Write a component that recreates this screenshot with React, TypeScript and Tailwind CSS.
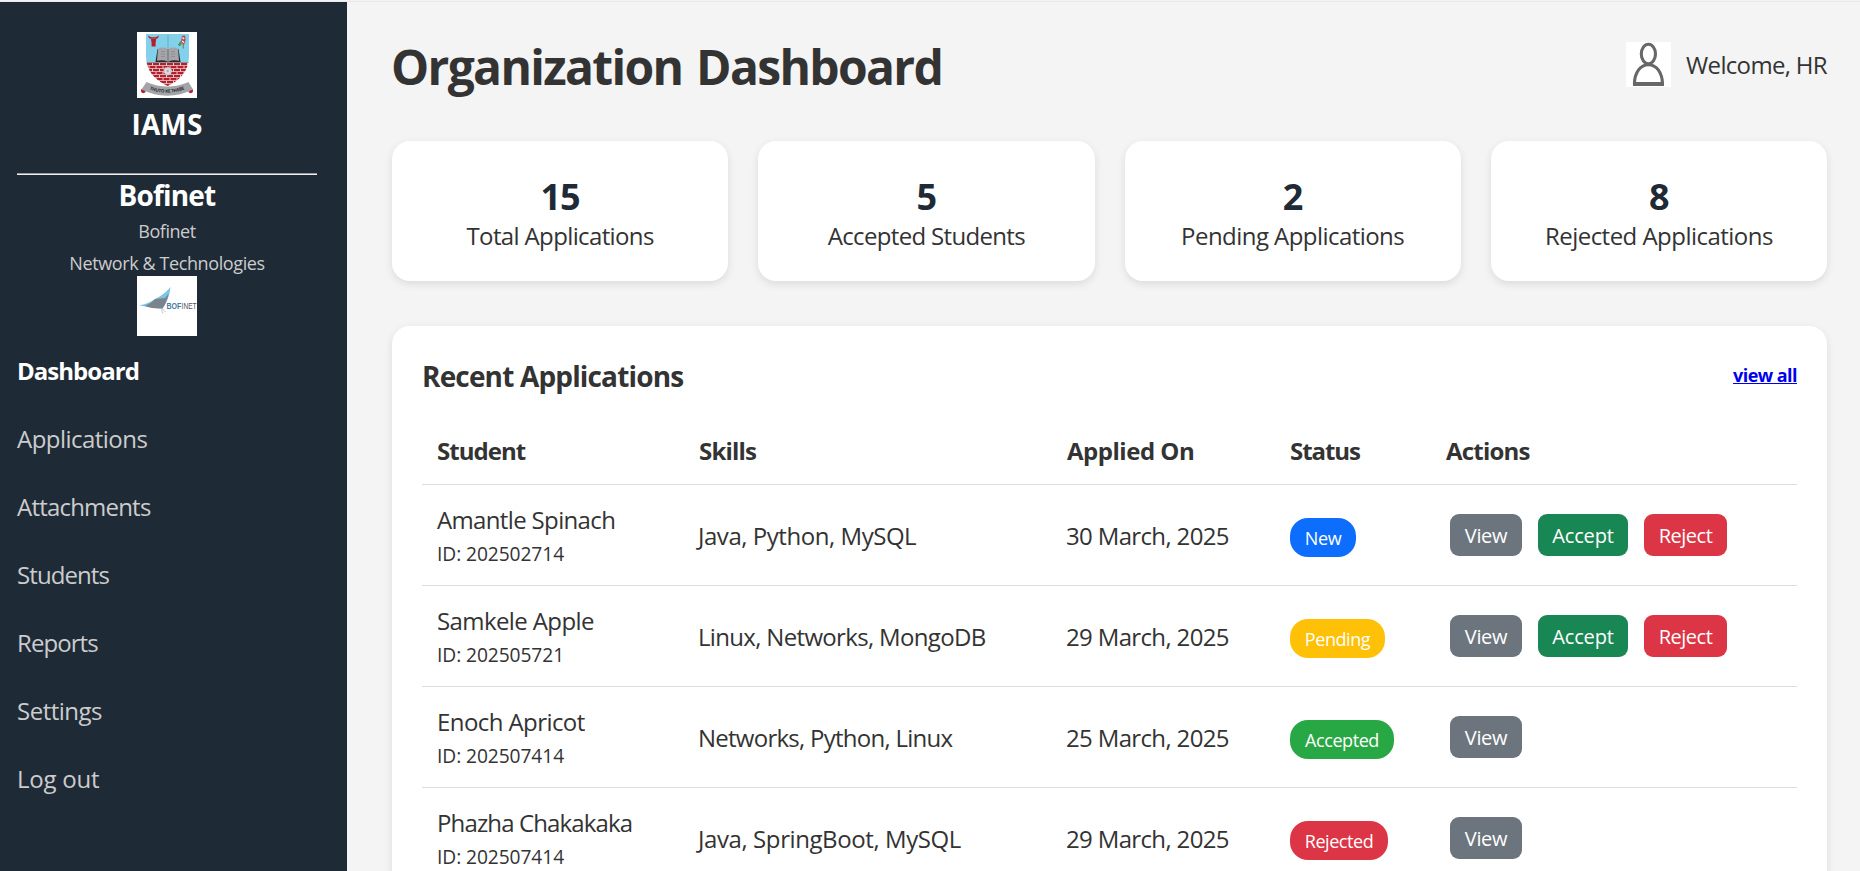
type Status = "New" | "Pending" | "Accepted" | "Rejected";

type Application = {
  name: string;
  id: string;
  skills: string;
  skillsClass: string;
  nameClass: string;
  appliedOn: string;
  status: Status;
};

const stats = [
  { value: "15", label: "Total Applications", tracking: "tracking-[-0.026em]" },
  { value: "5", label: "Accepted Students", tracking: "tracking-[-0.028em]" },
  { value: "2", label: "Pending Applications", tracking: "tracking-[-0.023em]" },
  { value: "8", label: "Rejected Applications", tracking: "tracking-[-0.022em]" },
];

const links = [
  { label: "Applications", tracking: "tracking-[-0.022em]" },
  { label: "Attachments", tracking: "tracking-[-0.033em]" },
  { label: "Students", tracking: "tracking-[-0.038em]" },
  { label: "Reports", tracking: "tracking-[-0.039em]" },
  { label: "Settings", tracking: "tracking-[-0.021em]" },
  { label: "Log out", tracking: "tracking-[-0.010em]" },
];

const applications: Application[] = [
  { name: "Amantle Spinach", nameClass: "tracking-[-0.027em]", id: "202502714", skills: "Java, Python, MySQL", skillsClass: "tracking-[-0.019em]", appliedOn: "30 March, 2025", status: "New" },
  { name: "Samkele Apple", nameClass: "tracking-[-0.025em]", id: "202505721", skills: "Linux, Networks, MongoDB", skillsClass: "tracking-[-0.028em]", appliedOn: "29 March, 2025", status: "Pending" },
  { name: "Enoch Apricot", nameClass: "tracking-[-0.024em]", id: "202507414", skills: "Networks, Python, Linux", skillsClass: "tracking-[-0.031em]", appliedOn: "25 March, 2025", status: "Accepted" },
  { name: "Phazha Chakakaka", nameClass: "tracking-[-0.036em]", id: "202507414", skills: "Java, SpringBoot, MySQL", skillsClass: "tracking-[-0.017em]", appliedOn: "29 March, 2025", status: "Rejected" },
];

const badges: Record<Status, string> = {
  New: "w-[66px] bg-[#0d6efd]",
  Pending: "w-[95px] bg-[#ffc107]",
  Accepted: "w-[104px] bg-[#28a745]",
  Rejected: "w-[98px] bg-[#dc3545]",
};

function Crest() {
  return (
    <svg viewBox="0 0 60 66" className="h-[66px] w-[60px] bg-white">
      <defs>
        <clipPath id="shield">
          <path d="M9 2H52V24C52 38 44 48 30.7 54C17 48 9 38 9 24Z" />
        </clipPath>
        <pattern id="bricks" x="9" y="31" width="7" height="6" patternUnits="userSpaceOnUse">
          <rect width="7" height="6" fill="#e6c9cc" />
          <rect x="0" y="0" width="6" height="2.2" fill="#b3202c" />
          <rect x="-3.5" y="3" width="6" height="2.2" fill="#b3202c" />
          <rect x="3.5" y="3" width="6" height="2.2" fill="#b3202c" />
        </pattern>
        <path id="motto" d="M12.5 57.4Q30.5 64.5 50 56.4" />
      </defs>
      <g clipPath="url(#shield)">
        <rect x="9" y="2" width="43" height="29" fill="#82d0ea" />
        <rect x="9" y="30.5" width="43" height="25" fill="url(#bricks)" />
        <rect x="9" y="30" width="43" height="0.9" fill="#8b8f96" />
      </g>
      <path d="M31 3V16" stroke="#6f9fb2" strokeWidth="0.8" />
      <path d="M11.3 3.5Q11 6.6 14 6.8H19Q22 6.6 21.6 3.5Q20 5.4 18 5.3H15Q13 5.4 11.3 3.5ZM13.8 6.5H19.3L18.6 11V14.5H14.6V11Z" fill="#b3202c" />
      <path d="M45 4L48 3.5L48.6 8L47 13L44 10Z" fill="#c2434b" />
      <path d="M45.5 5.5L47.2 7M45 9L47 10.5" stroke="#fff" strokeWidth="1.1" />
      <path d="M41 12.5L44 8.5L45 12L42.5 14.5Z" fill="#3f9a5a" />
      <path d="M46.2 12V16.5" stroke="#7b6b5c" strokeWidth="1" />
      <path d="M20.5 17H41.5L43.5 30H18.5Z" fill="#26282b" />
      <path d="M21 16.5Q26.5 14.5 31 17Q35.5 14.5 41 16.5L42 28.8Q36 27.5 31 29.8Q26 27.5 20 28.8Z" fill="#a3a5a9" />
      <path d="M31 17V29.5" stroke="#66686c" strokeWidth="0.9" />
      <path d="M24 19.5H28M24 22H28M24 24.5H28M34 19.5H38M34 22H38M34 24.5H38" stroke="#85878b" strokeWidth="0.7" />
      <circle cx="30.7" cy="39" r="3.6" fill="#dcdde0" stroke="#c9cbce" strokeWidth="1.6" strokeDasharray="1.4 0.9" />
      <circle cx="30.7" cy="39" r="1.2" fill="#a9abaf" />
      <circle cx="6.3" cy="58.8" r="2.4" fill="#b3202c" />
      <circle cx="53.7" cy="58.8" r="2.4" fill="#b3202c" />
      <path d="M9.5 50Q30.5 59 51.5 50L56 57.5Q30.5 70 4.5 57.5Z" fill="#a2a4a8" />
      <text fontSize="4.6" fontWeight="700" fill="#2b2c2e" fontFamily="Open Sans, sans-serif">
        <textPath href="#motto" textLength="36">THUTO KE THEBE</textPath>
      </text>
    </svg>
  );
}

function CompanyLogo() {
  return (
    <svg viewBox="0 0 60 60" className="h-[60px] w-[60px] overflow-visible bg-white">
      <path d="M2 29.3Q11 28 19 22.5Q28 18 33.5 11Q32.5 23 25.5 32.5Q14 32.5 2 29.3Z" fill="#7cc4e6" />
      <path d="M8 30Q14 27.5 18 23L28 22L31.5 18Q30 26 25.5 32.5Q16 33 8 30Z" fill="#7b848c" />
      <path d="M25.3 32Q23.8 34.5 26 37.5M25.5 33L28.5 36" stroke="#aab0b5" strokeWidth="0.7" fill="none" />
      <text x="29.4" y="33.4" fontSize="8.6" fontFamily="Liberation Sans, sans-serif" fontWeight="700" fill="#4a7da3" textLength="15" lengthAdjust="spacingAndGlyphs">
        BOF
      </text>
      <text x="44.6" y="33.4" fontSize="8.6" fontFamily="Liberation Sans, sans-serif" fill="#4d5258" textLength="15" lengthAdjust="spacingAndGlyphs">
        INET
      </text>
    </svg>
  );
}

function UserIcon() {
  return (
    <svg viewBox="0 0 45 45" className="h-[45px] w-[45px] bg-white" fill="none" stroke="#666867" strokeWidth="3.1">
      <ellipse cx="22.4" cy="12" rx="7.1" ry="9.7" />
      <path d="M8.4 42.2C8.6 30 14.6 22.7 22.4 22.7S36.3 30 36.5 42.2" />
      <path d="M7 42H38" strokeWidth="4" />
    </svg>
  );
}

function Sidebar() {
  return (
    <aside className="flex w-[347px] shrink-0 flex-col bg-[#1f2a37] pt-[30px] pr-[30px] pl-[17px] text-[#ccc]">
      <div className="flex flex-col items-center">
        <Crest />
        <h2 className="mt-[7px] text-[28px] leading-[38px] font-bold tracking-[0.004em] text-white">IAMS</h2>
      </div>
      <hr className="mt-[30px] h-[2px] border-0 border-t border-t-[#9a9a9a] bg-[#eee]" />
      <div className="flex flex-col items-center">
        <h2 className="pt-px text-[28px] leading-[38px] font-bold tracking-[-0.03em] text-white">Bofinet</h2>
        <p className="mt-px text-[18px] leading-8 tracking-[-0.026em]">Bofinet</p>
        <p className="mt-[3px] text-[18px] leading-[26px] tracking-[-0.022em]">Network &amp; Technologies</p>
        <CompanyLogo />
      </div>
      <nav className="flex flex-col pt-px text-2xl">
        <a className="leading-[68px] font-bold tracking-[-0.04em] text-white">Dashboard</a>
        {links.map((link) => (
          <a key={link.label} className={`leading-[68px] ${link.tracking}`}>
            {link.label}
          </a>
        ))}
      </nav>
    </aside>
  );
}

function ApplicationRow({ application }: { application: Application }) {
  const open = application.status === "New" || application.status === "Pending";
  return (
    <tr className="h-[101px] border-b border-[#ddd]">
      <td className="pt-[3px] pl-[15px]">
        <div className={`leading-[34px] ${application.nameClass}`}>{application.name}</div>
        <div className="text-[19.2px] leading-[33px] tracking-[-0.004em]">ID: {application.id}</div>
      </td>
      <td className={`pt-[2px] pl-[14px] ${application.skillsClass}`}>{application.skills}</td>
      <td className="pt-[2px] pl-[14px] tracking-[-0.027em]">{application.appliedOn}</td>
      <td className="pt-[5px] pl-[15px]">
        <span className={`flex h-[39px] items-center justify-center rounded-[18px] pt-px text-[18px] leading-6 tracking-[-0.024em] text-white ${badges[application.status]}`}>
          {application.status}
        </span>
      </td>
      <td className="pl-[19px]">
        <div className="flex h-[42px] text-[20px] font-medium text-white">
          <button className="w-[72px] rounded-[9px] bg-[#6c757d] pt-[3px] tracking-[-0.016em]">View</button>
          {open && (
            <>
              <button className="ml-[16px] w-[90px] rounded-[9px] bg-[#198754] pt-[3px] tracking-[-0.008em]">Accept</button>
              <button className="ml-[16px] w-[83px] rounded-[9px] bg-[#dc3545] pt-[3px] tracking-[-0.024em]">Reject</button>
            </>
          )}
        </div>
      </td>
    </tr>
  );
}

export default function App() {
  return (
    <div className="flex h-[871px] flex-col overflow-hidden bg-[#f4f4f4] font-['Open_Sans','Noto_Sans',sans-serif] text-2xl text-[#333]">
      <div className="h-[2px] shrink-0 border-b border-[#e9e9ed] bg-[#f3f3f7]" />
      <div className="flex min-h-0 flex-1">
        <Sidebar />
        <main className="min-w-0 flex-1 pt-[30px] pr-[33px] pl-[45px]">
          <header className="flex h-[65px] items-center justify-between">
            <h1 className="-ml-px pt-[4px] text-[48px] leading-[64px] font-bold tracking-[-0.035em] [word-spacing:3px]">Organization Dashboard</h1>
            <div className="flex items-center gap-[15px]">
              <UserIcon />
              <span className="pt-px leading-8 tracking-[-0.028em]">Welcome, HR</span>
            </div>
          </header>

          <section className="mt-[44px] grid grid-cols-4 gap-[30px]">
            {stats.map((stat) => (
              <div key={stat.label} className="h-[140px] rounded-[18px] bg-white pt-[32px] text-center shadow-[0_3px_8px_rgba(0,0,0,0.1)]">
                <h3 className="text-[36px] leading-[48px] font-bold tracking-[-0.03em] text-[#1f2a37]">{stat.value}</h3>
                <p className={`-mt-px leading-8 ${stat.tracking}`}>{stat.label}</p>
              </div>
            ))}
          </section>

          <section className="mt-[45px] h-[700px] rounded-[18px] bg-white p-[30px] shadow-[0_3px_8px_rgba(0,0,0,0.1)]">
            <div className="flex h-[38px] items-center justify-between">
              <h2 className="pt-[2px] text-[28px] leading-[38px] font-bold tracking-[-0.03em]">Recent Applications</h2>
              <a className="text-[18px] leading-6 font-bold tracking-[-0.03em] text-[#0000ee] underline">view all</a>
            </div>
            <table className="mt-[23px] w-full table-fixed border-collapse text-left">
              <colgroup>
                <col className="w-[262px]" />
                <col className="w-[368px]" />
                <col className="w-[223px]" />
                <col className="w-[156px]" />
                <col />
              </colgroup>
              <thead>
                <tr className="h-[67px] border-b border-[#ddd] font-bold">
                  <th className="pt-px pl-[15px] tracking-[-0.04em]">Student</th>
                  <th className="pt-px pl-[15px] tracking-[-0.033em]">Skills</th>
                  <th className="pt-px pl-[15px] tracking-[-0.02em]">Applied On</th>
                  <th className="pt-px pl-[15px] tracking-[-0.045em]">Status</th>
                  <th className="pt-px pl-[15px] tracking-[-0.033em]">Actions</th>
                </tr>
              </thead>
              <tbody>
                {applications.map((application) => (
                  <ApplicationRow key={application.name} application={application} />
                ))}
              </tbody>
            </table>
          </section>
        </main>
      </div>
    </div>
  );
}
